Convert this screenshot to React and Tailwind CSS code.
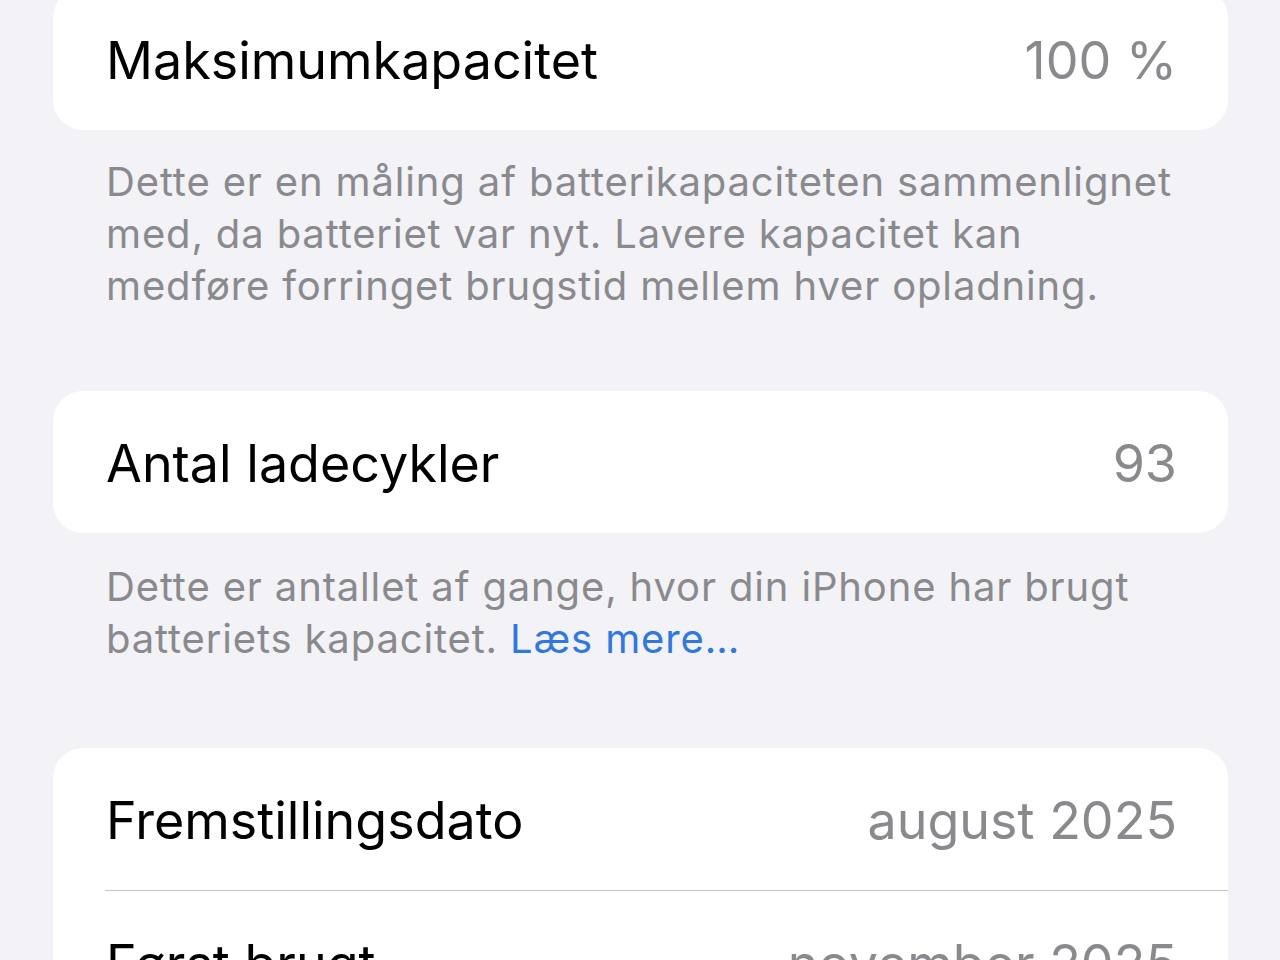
import React from 'react';

const font = { fontFamily: 'Inter, "Noto Sans", sans-serif' };

function Row({ label, value, divider }) {
  return (
    <div className="relative">
      <div className="flex h-[142px] items-center justify-between pl-[53px] pr-[51px] pt-[4px]">
        <span className="text-[52px] leading-none text-black">{label}</span>
        <span className="text-[52px] leading-none text-[#8a8a8e]">{value}</span>
      </div>
      {divider && <div className="ml-[52px] h-px bg-[#c6c6c8]" />}
    </div>
  );
}

function Card({ children }) {
  return <div className="overflow-hidden rounded-[30px] bg-white">{children}</div>;
}

function Footer({ children, className = '' }) {
  return (
    <p className={`px-[53px] text-[40px] leading-[52px] tracking-[0.85px] text-[#8a8a8e] ${className}`}>
      {children}
    </p>
  );
}

export default function App() {
  return (
    <div className="h-[960px] overflow-hidden bg-[#f2f2f7]" style={font}>
      <div className="-mt-[12px] pl-[53px] pr-[52px]">
        <Card>
          <Row label="Maksimumkapacitet" value="100 %" />
        </Card>
        <Footer className="mt-[26px]">
          Dette er en måling af batterikapaciteten sammenlignet
          <br />
          med, da batteriet var nyt. Lavere kapacitet kan
          <br />
          medføre forringet brugstid mellem hver opladning.
        </Footer>

        <div className="mt-[79px]">
          <Card>
            <Row label="Antal ladecykler" value="93" />
          </Card>
        </div>
        <Footer className="mt-[28px]">
          Dette er antallet af gange, hvor din iPhone har brugt
          <br />
          batteriets kapacitet. <span className="text-[#2f78e0]">Læs mere…</span>
        </Footer>

        <div className="mt-[83px]">
          <Card>
            <Row label="Fremstillingsdato" value="august 2025" divider />
            <Row label="Først brugt" value="november 2025" />
          </Card>
        </div>
      </div>
    </div>
  );
}
